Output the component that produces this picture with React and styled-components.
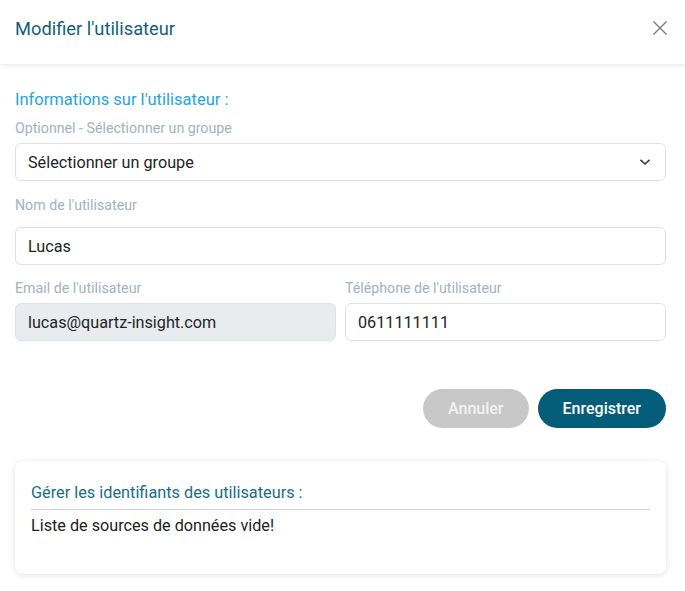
import React from "react";
import styled, { createGlobalStyle } from "styled-components";

const Global = createGlobalStyle`
  html, body { margin: 0; padding: 0; background: #fff; }
  body { font-family: Roboto, "Noto Sans", sans-serif; }
  * { box-sizing: border-box; }
`;

const Modal = styled.div`
  width: 685px;
  height: 591px;
  background: #fff;
  display: flex;
  flex-direction: column;
`;

const Header = styled.div`
  height: 65px;
  display: flex;
  align-items: center;
  justify-content: space-between;
  padding: 0 17px 8px 15px;
  box-shadow: 0 2px 4px rgba(0, 0, 0, 0.06);
  border-bottom: 1px solid #f1f1f1;
`;

const Title = styled.h1`
  margin: 0;
  font-size: 18.3px;
  font-weight: 400;
  color: #125f7a;
`;

const Close = styled.button`
  border: 0;
  background: none;
  padding: 0;
  width: 16px;
  height: 16px;
  display: flex;
  color: #7a7a7a;
  cursor: pointer;
`;

const Body = styled.div`
  padding: 25px 19px 0 15px;
  display: flex;
  flex-direction: column;
`;

const SectionTitle = styled.div`
  font-size: 16.5px;
  color: #27a4e0;
  line-height: 20px;
  margin-bottom: 10px;
`;

const Label = styled.div`
  font-size: 14.2px;
  color: #a3b2c2;
  line-height: 16px;
  margin-bottom: ${(p) => p.$gap || 7}px;
`;

const Field = styled.div`
  height: 38px;
  border: 1px solid #dee2e6;
  border-radius: 6px;
  background: ${(p) => (p.$disabled ? "#e9ecef" : "#fff")};
  display: flex;
  align-items: center;
  justify-content: space-between;
  padding: 0 14px 0 12px;
  font-size: 16.2px;
  color: #212529;
  margin-bottom: ${(p) => p.$mb || 0}px;
`;

const Row = styled.div`
  display: grid;
  grid-template-columns: 1fr 1fr;
  column-gap: 9px;
`;

const Col = styled.div`
  display: flex;
  flex-direction: column;
`;

const Actions = styled.div`
  display: flex;
  justify-content: flex-end;
  gap: 9px;
  margin-top: 48px;
`;

const Button = styled.button`
  height: 39px;
  border: 0;
  border-radius: 20px;
  padding: 0 25px;
  font-family: Roboto, sans-serif;
  font-size: 16px;
  font-weight: 500;
  color: ${(p) => (p.$primary ? "#fff" : "#f2f2f2")};
  background: ${(p) => (p.$primary ? "#045d78" : "#c8c8c8")};
  min-width: ${(p) => (p.$primary ? 128 : 104)}px;
`;

const Card = styled.div`
  margin-top: 33px;
  height: 113px;
  border-radius: 8px;
  background: #fff;
  box-shadow: 0 1px 6px rgba(0, 0, 0, 0.12);
  padding: 22px 16px 0 16px;
`;

const CardTitle = styled.div`
  font-size: 16.3px;
  color: #186e89;
  line-height: 20px;
  padding-bottom: 6px;
  border-bottom: 1px solid #d3d3d3;
`;

const CardText = styled.div`
  font-size: 16.2px;
  color: #222;
  line-height: 20px;
  margin-top: 6px;
`;

export default function App() {
  return (
    <Modal>
      <Global />
      <Header>
        <Title>Modifier l'utilisateur</Title>
        <Close aria-label="Fermer">
          <svg width="16" height="16" viewBox="0 0 16 16" fill="none" stroke="currentColor" strokeWidth="1.4">
            <path d="M1.5 1.5 L14.5 14.5 M14.5 1.5 L1.5 14.5" />
          </svg>
        </Close>
      </Header>
      <Body>
        <SectionTitle>Informations sur l'utilisateur :</SectionTitle>
        <Label>Optionnel - Sélectionner un groupe</Label>
        <Field $mb={16}>
          <span>Sélectionner un groupe</span>
          <svg width="12" height="8" viewBox="0 0 12 8" fill="none" stroke="#343a40" strokeWidth="1.6">
            <path d="M1.5 1.8 L6 6 L10.5 1.8" />
          </svg>
        </Field>
        <Label $gap={14}>Nom de l'utilisateur</Label>
        <Field $mb={15}>Lucas</Field>
        <Row>
          <Col>
            <Label>Email de l'utilisateur</Label>
            <Field $disabled>lucas@quartz-insight.com</Field>
          </Col>
          <Col>
            <Label>Téléphone de l'utilisateur</Label>
            <Field>0611111111</Field>
          </Col>
        </Row>
        <Actions>
          <Button>Annuler</Button>
          <Button $primary>Enregistrer</Button>
        </Actions>
        <Card>
          <CardTitle>Gérer les identifiants des utilisateurs :</CardTitle>
          <CardText>Liste de sources de données vide!</CardText>
        </Card>
      </Body>
    </Modal>
  );
}
